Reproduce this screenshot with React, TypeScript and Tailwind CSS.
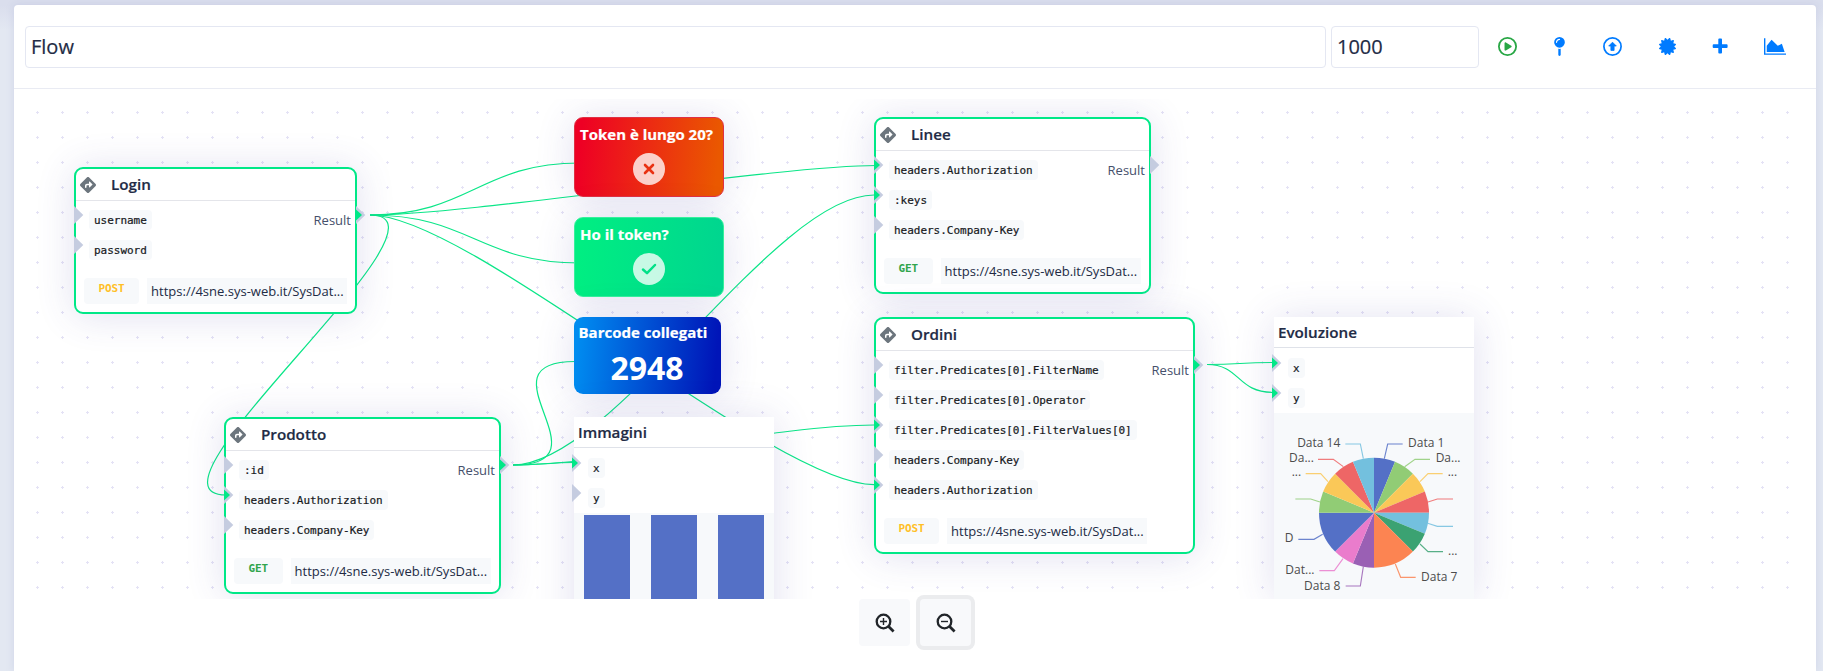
import type { ReactNode } from 'react';
import { FaRegCirclePlay, FaMapPin, FaCertificate, FaDiamondTurnRight } from 'react-icons/fa6';

const CANVAS_LEFT = 24;
const CANVAS_TOP = 99;

function Port({ side, linked }: { side: 'in' | 'out'; linked?: boolean }) {
  return (
    <svg
      width="10"
      height="18"
      viewBox="0 0 10 18"
      className={side === 'in' ? 'absolute top-[-4px] left-[-2px]' : 'absolute top-[-4px] right-[-11px]'}
    >
      <path d="M0 0L9.3 9L0 18Z" fill="#c5cce0" />
      {linked && <path d="M0 3.4L6 9L0 14.6Z" fill="#00e887" />}
    </svg>
  );
}

function Chip({ children }: { children: ReactNode }) {
  return (
    <span className="flex h-5 items-center rounded bg-[#f7f9fb] px-[5px] pt-[2px] font-['DejaVu_Sans_Mono',monospace] text-[11px] tracking-[-0.02px] text-[#15181c] [-webkit-text-stroke:0.2px_#15181c]">
      {children}
    </span>
  );
}

type Param = [name: string, linked?: boolean];

function RequestNode(props: {
  place: string;
  title: string;
  params: Param[];
  method: 'GET' | 'POST';
  linkedOut?: boolean;
}) {
  return (
    <section
      className={`absolute flex flex-col rounded-[9px] border-2 border-[#00e887] bg-white shadow-[0_2px_38px_rgba(70,60,160,0.16)] ${props.place}`}
    >
      <header className="flex h-8 shrink-0 items-center border-b border-[#e4e5ea] pl-1">
        <FaDiamondTurnRight className="size-4 text-[#6c757d]" />
        <h2 className="ml-[15px] text-[15.2px] font-semibold text-[#222b45] [-webkit-text-stroke:0.2px_#222b45]">
          {props.title}
        </h2>
      </header>
      <div className="relative mt-[9px] flex flex-col gap-[10px]">
        {props.params.map(([name, linked]) => (
          <div key={name} className="relative flex pl-[13px]">
            <Port side="in" linked={linked} />
            <Chip>{name}</Chip>
          </div>
        ))}
        <div className="absolute top-0 right-0 flex h-5 items-center pt-[2px] pr-[4px]">
          <span className="text-[13px] text-[#45506b]">Result</span>
          <Port side="out" linked={props.linkedOut} />
        </div>
      </div>
      <footer className="mt-[18px] flex h-[26px] gap-2 pl-[8px]">
        <span
          className={`rounded bg-[#f7f9fb] px-[14.5px] pt-[3px] font-['DejaVu_Sans_Mono',monospace] text-[11px] font-bold tracking-[-0.1px] ${
            props.method === 'POST' ? 'text-[#ffbf26]' : 'text-[#31a54c]'
          }`}
        >
          {props.method}
        </span>
        <span className="flex w-[200px] items-center bg-[#f7f9fb] pt-[1px] pl-1 text-[13px] text-[#222b45]">
          https://4sne.sys-web.it/SysDat...
        </span>
      </footer>
    </section>
  );
}

function ChartNode(props: { place: string; title: string; params: Param[]; children: ReactNode }) {
  return (
    <section className={`absolute flex flex-col bg-white shadow-[0_2px_38px_rgba(70,60,160,0.16)] ${props.place}`}>
      <header className="flex h-[31px] shrink-0 items-center border-b border-[#dfe2e9] pl-[4px]">
        <h2 className="text-[15.2px] font-semibold text-[#222b45] [-webkit-text-stroke:0.2px_#222b45]">
          {props.title}
        </h2>
      </header>
      <div className="flex h-[65px] shrink-0 flex-col gap-[10px] pt-[10px]">
        {props.params.map(([name, linked]) => (
          <div key={name} className="relative flex pl-[14px]">
            <Port side="in" linked={linked} />
            <Chip>{name}</Chip>
          </div>
        ))}
      </div>
      <div className="bg-[#f7f9fb]">{props.children}</div>
    </section>
  );
}

function StatusNode({ place, title, icon }: { place: string; title: string; icon: ReactNode }) {
  return (
    <section
      className={`absolute flex h-[80px] w-[150px] flex-col items-center rounded-[9px] border shadow-[0_2px_38px_rgba(70,60,160,0.16)] ${place}`}
    >
      <h2 className="mt-[5px] self-start pl-[5px] text-[15px] leading-[23px] font-bold whitespace-nowrap text-white [-webkit-text-stroke:0.2px_white]">
        {title}
      </h2>
      <span className="mt-[7px] flex size-8 items-center justify-center rounded-full bg-white/78">{icon}</span>
    </section>
  );
}

const wires = [
  'M370 215C470 215 480 163 580 163',
  'M370 215C470 215 777 165.5 877 165.5',
  'M370 215C470 215 480 263 580 263',
  'M370 215C470 215 774 484.7 874 484.7',
  'M370 215C470 215 126 495 226 495',
  'M513 465C613 465 475 361.5 575 361.5',
  'M513 465C543 465 545 462.5 575 462.5',
  'M513 465C613 465 774 195 874 195',
  'M513 465C613 465 774 425 874 425',
  'M1207 364.5C1241 364.5 1239 362.5 1275 362.5',
  'M1207 364.5C1241 364.5 1236 392.5 1274 392.5',
];

function Grid() {
  return (
    <svg className="absolute inset-0" width="1774" height="500">
      <defs>
        <pattern id="grid" x="1" y="1" width="25" height="25" patternUnits="userSpaceOnUse">
          <path d="M11 12.5h3M12.5 11v3" stroke="#e4e2f5" strokeWidth="1" />
        </pattern>
      </defs>
      <rect width="1774" height="500" fill="url(#grid)" />
    </svg>
  );
}

function WireLayer() {
  return (
    <svg className="absolute inset-0" width="1774" height="500">
      <g transform={`translate(${-CANVAS_LEFT} ${-CANVAS_TOP})`} fill="none" stroke="#0be688" strokeWidth="1.2">
        {wires.map((d) => (
          <path key={d} d={d} />
        ))}
      </g>
    </svg>
  );
}

const palette = ['#5470c6', '#91cc75', '#fac858', '#ee6666', '#73c0de', '#3ba272', '#fc8452', '#9a60b4', '#ea7ccc'];

type Slice = { units: number; line: string; label?: string; x?: number; y?: number; end?: boolean };

const slices: Slice[] = [
  { units: 1, line: '331,137 341,93 386,93', label: 'Data 1', x: 402, y: 102 },
  { units: 1, line: '392,161 423,139 468,139', label: 'Da...', x: 485, y: 148 },
  { units: 1, line: '438,206 462,182 506,182', label: '...', x: 521, y: 189 },
  { units: 1, line: '462,267 490,258 537,258' },
  { units: 1, line: '461,331 490,340 537,340' },
  { units: 1, line: '438,393 462,416 507,416', label: '...', x: 522, y: 425 },
  { units: 2, line: '364,453 380,493 425,493', label: 'Data 7', x: 441, y: 504 },
  { units: 1, line: '268,461 259,519 215,519', label: 'Data 8', x: 199, y: 530, end: true },
  { units: 1, line: '207,437 181,473 136,473', label: 'Dat...', x: 34, y: 484 },
  { units: 2, line: '146,364 120,379 73,379', label: 'D', x: 32, y: 388 },
  { units: 1, line: '138,267 110,258 64,258' },
  { units: 1, line: '162,206 140,182 95,182', label: '...', x: 53, y: 189 },
  { units: 1, line: '208,161 178,139 132,139', label: 'Da...', x: 45, y: 148 },
  { units: 1, line: '268,137 259,93 214,93', label: 'Data 14', x: 199, y: 102, end: true },
];

// Slice 10 restarts the palette, which has nine colours.
function PieChart() {
  const cx = 300;
  const cy = 299;
  const r = 165;
  let used = 0;
  const point = (units: number) => {
    const a = (units / 16) * 2 * Math.PI;
    return `${cx + r * Math.sin(a)} ${cy - r * Math.cos(a)}`;
  };
  return (
    <svg width="200" height="186" viewBox="0 0 600 558" className="block">
      {slices.map((s, i) => {
        const from = used;
        used += s.units;
        const color = palette[i % palette.length];
        return (
          <g key={i}>
            <path d={`M${cx} ${cy}L${point(from)}A${r} ${r} 0 0 1 ${point(used)}Z`} fill={color} />
            <polyline points={s.line} fill="none" stroke={color} strokeWidth="3.4" strokeOpacity="0.85" />
            {s.label && (
              <text x={s.x} y={s.y} fontSize="36" fill="#4c4c4c" textAnchor={s.end ? 'end' : 'start'}>
                {s.label}
              </text>
            )}
          </g>
        );
      })}
    </svg>
  );
}

function ZoomIcon({ plus }: { plus?: boolean }) {
  return (
    <svg width="20" height="20" viewBox="0 0 20 20" fill="none" stroke="#212529">
      <circle cx="8.5" cy="8.5" r="6.8" strokeWidth="2.3" />
      <path d="M13.6 13.6L18.6 18.4" strokeWidth="2.8" />
      <path d={plus ? 'M5 8.5h7M8.5 5v7' : 'M5 8.5h7'} strokeWidth="1.4" />
    </svg>
  );
}

function Toolbar() {
  return (
    <div className="flex items-center text-[#007bff]">
      <FaRegCirclePlay className="ml-[19px] size-[19px] text-[#28a745]" />
      <FaMapPin className="ml-[33px] size-[19px]" />
      <svg className="ml-[34px]" width="19" height="19" viewBox="0 0 19 19">
        <circle cx="9.5" cy="9.5" r="8.6" fill="none" stroke="currentColor" strokeWidth="1.7" />
        <path
          d="M9.5 5.2L13.3 9H11.1V13.4H7.9V9H5.7Z"
          fill="currentColor"
          stroke="currentColor"
          strokeWidth="0.8"
          strokeLinejoin="round"
        />
      </svg>
      <FaCertificate className="mb-[1px] ml-[37px] size-[17px]" />
      <svg className="mb-[2px] ml-[36px]" width="16" height="16" viewBox="0 0 16 16">
        <path
          d="M6.3 1.4q0-.9.9-.9h1.9q.9 0 .9.9v4.9h4.7q.9 0 .9.9v1.900q0 .9-.9.9H10v4.6q0 .9-.9.9H7.200q-.9 0-.9-.9V10H1.600q-.9 0-.9-.9V7.200q0-.9.9-.9h4.700z"
          fill="currentColor"
        />
      </svg>
      <svg className="ml-[36px]" width="22" height="17" viewBox="0 0 2048 1536">
        <path d="M2048 1408v128H0V0h128v1408zM1664 512l256 768H256V704l448-576 576 576z" fill="currentColor" />
      </svg>
    </div>
  );
}

export default function App() {
  return (
    <div className="flex h-[671px] w-[1823px] overflow-hidden bg-[linear-gradient(#dadeed,#dadeed_5px,#e3e8f2_30px)] pt-[5px] pr-[7px] pl-[14px] font-['Open_Sans',sans-serif]">
      <main className="flex h-[666px] w-[1802px] flex-col rounded-t bg-white shadow-[0_0_8px_rgba(120,130,190,0.18)]">
        <header className="flex h-[84px] items-center border-b border-[#e9ebf3] pl-[11px]">
          <input
            defaultValue="Flow"
            className="h-[42px] w-[1301px] rounded border border-[#e4e7f2] px-[5px] text-xl text-[#222b45] outline-none [-webkit-text-stroke:0.2px_#222b45]"
          />
          <input
            defaultValue="1000"
            className="ml-[5px] h-[42px] w-[148px] rounded border border-[#e4e7f2] px-[5px] text-xl text-[#222b45] outline-none [-webkit-text-stroke:0.2px_#222b45]"
          />
          <Toolbar />
        </header>

        <div className="relative mt-[10px] ml-[10px] h-[500px] w-[1774px] shrink-0 overflow-hidden">
          <Grid />
          <WireLayer />
          <StatusNode
            place="left-[550px] top-[18px] border-[#df3044] bg-[linear-gradient(95deg,#ee0024_5%,#ea5800_95%)]"
            title="Token è lungo 20?"
            icon={
              <svg width="12" height="12" viewBox="0 0 12 12">
                <path d="M2 2L10 10M10 2L2 10" stroke="#e93112" strokeWidth="2.6" strokeLinecap="round" />
              </svg>
            }
          />
          <StatusNode
            place="left-[550px] top-[118px] border-[#35f09c] bg-[linear-gradient(95deg,#00ee82_5%,#00d68f_95%)]"
            title="Ho il token?"
            icon={
              <svg width="16" height="12" viewBox="0 0 16 12" fill="none">
                <path
                  d="M2 6.5L6 10.2L14 2"
                  stroke="#00e188"
                  strokeWidth="2.5"
                  strokeLinecap="round"
                  strokeLinejoin="round"
                />
              </svg>
            }
          />
          <section className="absolute top-[218px] left-[550px] flex h-[77px] w-[147px] flex-col items-center rounded-[9px] bg-[linear-gradient(95deg,#008cf0_3%,#0015b8_95%)] text-white shadow-[0_2px_38px_rgba(70,60,160,0.16)]">
            <h2 className="mt-[4px] self-start pl-[4.5px] text-[15px] leading-[23px] font-bold whitespace-nowrap [-webkit-text-stroke:0.2px_white]">
              Barcode collegati
            </h2>
            <p className="mt-[1px] pr-[1px] text-[32px] leading-[46px] font-bold">2948</p>
          </section>
          <RequestNode
            place="left-[50px] top-[68px] h-[147px] w-[283px]"
            title="Login"
            params={[['username'], ['password']]}
            method="POST"
            linkedOut
          />
          <RequestNode
            place="left-[200px] top-[318px] h-[177px] w-[277px]"
            title="Prodotto"
            params={[[':id'], ['headers.Authorization', true], ['headers.Company-Key']]}
            method="GET"
            linkedOut
          />
          <RequestNode
            place="left-[850px] top-[18px] h-[177px] w-[277px]"
            title="Linee"
            params={[['headers.Authorization', true], [':keys', true], ['headers.Company-Key']]}
            method="GET"
          />
          <RequestNode
            place="left-[850px] top-[218px] h-[237px] w-[321px]"
            title="Ordini"
            params={[
              ['filter.Predicates[0].FilterName'],
              ['filter.Predicates[0].Operator'],
              ['filter.Predicates[0].FilterValues[0]', true],
              ['headers.Company-Key'],
              ['headers.Authorization', true],
            ]}
            method="POST"
            linkedOut
          />
          <ChartNode place="left-[550px] top-[318px] w-[200px]" title="Immagini" params={[['x', true], ['y']]}>
            <div className="flex h-[200px] gap-[21px] pt-[2px] pl-[10px]">
              <div className="w-[46px] bg-[#5470c6]" />
              <div className="w-[46px] bg-[#5470c6]" />
              <div className="w-[46px] bg-[#5470c6]" />
            </div>
          </ChartNode>
          <ChartNode place="left-[1250px] top-[218px] w-[200px]" title="Evoluzione" params={[['x', true], ['y', true]]}>
            <PieChart />
          </ChartNode>
        </div>

        <div className="flex gap-[10px] pl-[845px]">
          <button className="flex h-[47px] w-[51px] items-center justify-center rounded bg-[#f8f9fb]">
            <ZoomIcon plus />
          </button>
          <button className="flex h-[47px] w-[51px] items-center justify-center rounded bg-[#f8f9fb] shadow-[0_0_0_4px_#ebecee]">
            <ZoomIcon />
          </button>
        </div>
      </main>
    </div>
  );
}
